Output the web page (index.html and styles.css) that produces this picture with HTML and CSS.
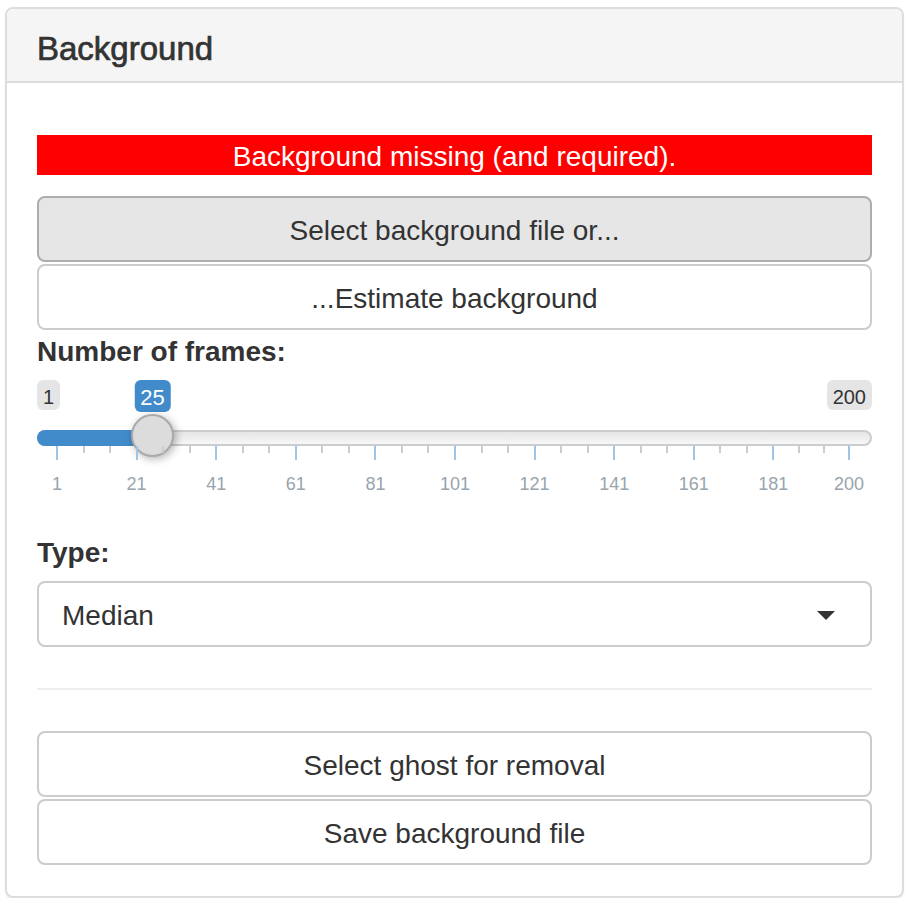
FILE: index.html
```html
<!DOCTYPE html>
<html>
<head>
<meta charset="utf-8">
<link rel="stylesheet" href="styles.css">
</head>
<body>
<div class="page">
  <div class="panel">
    <div class="panel-heading"><h3 class="panel-title">Background</h3></div>
    <div class="panel-body">
      <div class="alert-missing">Background missing (and required).</div>
      <div class="btn-stack first-stack">
        <button class="btn btn-active">Select background file or...</button>
        <button class="btn">...Estimate background</button>
      </div>
      <div class="form-group">
        <label class="control-label">Number of frames:</label>
        <div class="irs">
          <span class="irs-min">1</span>
          <span class="irs-max">200</span>
          <span class="irs-single">25</span>
          <span class="irs-line"></span>
          <span class="irs-bar"></span>
          <span class="irs-handle"></span>
          <div class="irs-grid">
            <span class="tick" style="left:0%"></span>
            <span class="tick small" style="left:3.350%"></span>
            <span class="tick small" style="left:6.700%"></span>
            <span class="tick" style="left:10.050%"></span>
            <span class="tick small" style="left:13.400%"></span>
            <span class="tick small" style="left:16.750%"></span>
            <span class="tick" style="left:20.101%"></span>
            <span class="tick small" style="left:23.451%"></span>
            <span class="tick small" style="left:26.801%"></span>
            <span class="tick" style="left:30.151%"></span>
            <span class="tick small" style="left:33.501%"></span>
            <span class="tick small" style="left:36.851%"></span>
            <span class="tick" style="left:40.201%"></span>
            <span class="tick small" style="left:43.551%"></span>
            <span class="tick small" style="left:46.901%"></span>
            <span class="tick" style="left:50.251%"></span>
            <span class="tick small" style="left:53.601%"></span>
            <span class="tick small" style="left:56.951%"></span>
            <span class="tick" style="left:60.302%"></span>
            <span class="tick small" style="left:63.652%"></span>
            <span class="tick small" style="left:67.002%"></span>
            <span class="tick" style="left:70.352%"></span>
            <span class="tick small" style="left:73.702%"></span>
            <span class="tick small" style="left:77.052%"></span>
            <span class="tick" style="left:80.402%"></span>
            <span class="tick small" style="left:83.752%"></span>
            <span class="tick small" style="left:87.102%"></span>
            <span class="tick" style="left:90.452%"></span>
            <span class="tick small" style="left:93.635%"></span>
            <span class="tick small" style="left:96.817%"></span>
            <span class="tick" style="left:100%"></span>
            <span class="grid-text" style="left:0%">1</span>
            <span class="grid-text" style="left:10.050%">21</span>
            <span class="grid-text" style="left:20.101%">41</span>
            <span class="grid-text" style="left:30.151%">61</span>
            <span class="grid-text" style="left:40.201%">81</span>
            <span class="grid-text" style="left:50.251%">101</span>
            <span class="grid-text" style="left:60.302%">121</span>
            <span class="grid-text" style="left:70.352%">141</span>
            <span class="grid-text" style="left:80.402%">161</span>
            <span class="grid-text" style="left:90.452%">181</span>
            <span class="grid-text" style="left:100%">200</span>
          </div>
        </div>
      </div>
      <div class="form-group last">
        <label class="control-label">Type:</label>
        <div class="select"><span class="select-value">Median</span><span class="caret"></span></div>
      </div>
      <hr class="divider">
      <div class="btn-stack">
        <button class="btn">Select ghost for removal</button>
        <button class="btn">Save background file</button>
      </div>
    </div>
  </div>
</div>
</body>
</html>
```
FILE: styles.css
```css
* { box-sizing: border-box; }
body {
  margin: 0;
  font-family: "Liberation Sans", Arial, Helvetica, sans-serif;
  color: #333;
  background: #fff;
}
.page { padding: 7px 4px 0 5px; }
.panel {
  border: 2px solid #ddd;
  border-radius: 8px;
  background: #fff;
  box-shadow: 0 2px 2px rgba(0,0,0,0.05);
}
.panel-heading {
  background: #f5f5f5;
  border-bottom: 2px solid #ddd;
  border-radius: 6px 6px 0 0;
  padding: 22px 30px 14px;
}
.panel-title {
  margin: 0;
  font-size: 33px;
  line-height: 36px;
  font-weight: normal;
  -webkit-text-stroke: 0.7px #333;
}
.panel-body { padding: 30px 30px 31px; }
.alert-missing {
  margin-top: 22px;
  background: #ff0000;
  color: #fff;
  text-align: center;
  font-size: 28px;
  height: 40px;
  padding-top: 4px;
  line-height: 36px;
}
.btn-stack { display: flex; flex-direction: column; gap: 2px; }
.first-stack { margin-top: 21px; }
.btn {
  display: block;
  width: 100%;
  border: 2px solid #ccc;
  border-radius: 8px;
  background: #fff;
  padding: 13px 24px 9px;
  font-family: inherit;
  font-size: 28px;
  line-height: 40px;
  color: #333;
  text-align: center;
}
.btn-active { background: #e6e6e6; border-color: #adadad; }
.form-group { margin-bottom: 30px; }
.form-group.last { margin-bottom: 0; }
.control-label {
  display: block;
  font-weight: bold;
  font-size: 28px;
  line-height: 40px;
  padding-top: 2px;
  margin-bottom: 8px;
}
.irs { position: relative; height: 121px; }
.irs-min, .irs-max {
  position: absolute;
  top: 0;
  font-size: 20px;
  line-height: 26px;
  padding: 4px 6px 0;
  background: rgba(0,0,0,0.1);
  border-radius: 6px;
  color: #333;
}
.irs-min { left: 0; }
.irs-max { right: 0; }
.irs-single {
  position: absolute;
  top: 0;
  left: 115.5px;
  transform: translateX(-50%);
  font-size: 22px;
  line-height: 28px;
  padding: 4px 6px 0;
  background: #428bca;
  color: #fff;
  border-radius: 6px;
}
.irs-line {
  position: absolute;
  top: 50px;
  left: 0;
  right: 0;
  height: 16px;
  border: 2px solid #ccc;
  border-radius: 16px;
  background: linear-gradient(to bottom, #ddd -50%, #fff 150%);
}
.irs-bar {
  position: absolute;
  top: 50px;
  left: 0;
  width: 116px;
  height: 16px;
  background: #428bca;
  border-radius: 16px 0 0 16px;
}
.irs-handle {
  position: absolute;
  top: 34px;
  left: 94px;
  width: 43px;
  height: 43px;
  border: 2px solid #aaa;
  border-radius: 50%;
  background: #dcdcdc;
  box-shadow: 2px 2px 8px rgba(0,0,0,0.3);
}
.irs-grid {
  position: absolute;
  top: 66px;
  left: 20px;
  right: 23px;
  height: 55px;
}
.tick {
  position: absolute;
  top: 0;
  width: 2px;
  margin-left: -1px;
  height: 14px;
  background: #a0c5e4;
}
.tick.small { height: 7px; background: #ccc; }
.grid-text {
  position: absolute;
  top: 27px;
  transform: translateX(-50%);
  font-size: 18px;
  line-height: 22px;
  color: #99a4ac;
  white-space: nowrap;
}
.select {
  display: flex;
  justify-content: space-between;
  align-items: center;
  height: 66px;
  border: 2px solid #ccc;
  border-radius: 8px;
  padding: 0 35px 0 23px;
  font-size: 28px;
}
.select-value { padding-top: 4px; }
.caret {
  width: 0;
  height: 0;
  margin-top: 2px;
  border-left: 9px solid transparent;
  border-right: 9px solid transparent;
  border-top: 9px solid #333;
}
.divider {
  margin: 41px 0;
  border: 0;
  border-top: 2px solid #eee;
  height: 0;
}
```
